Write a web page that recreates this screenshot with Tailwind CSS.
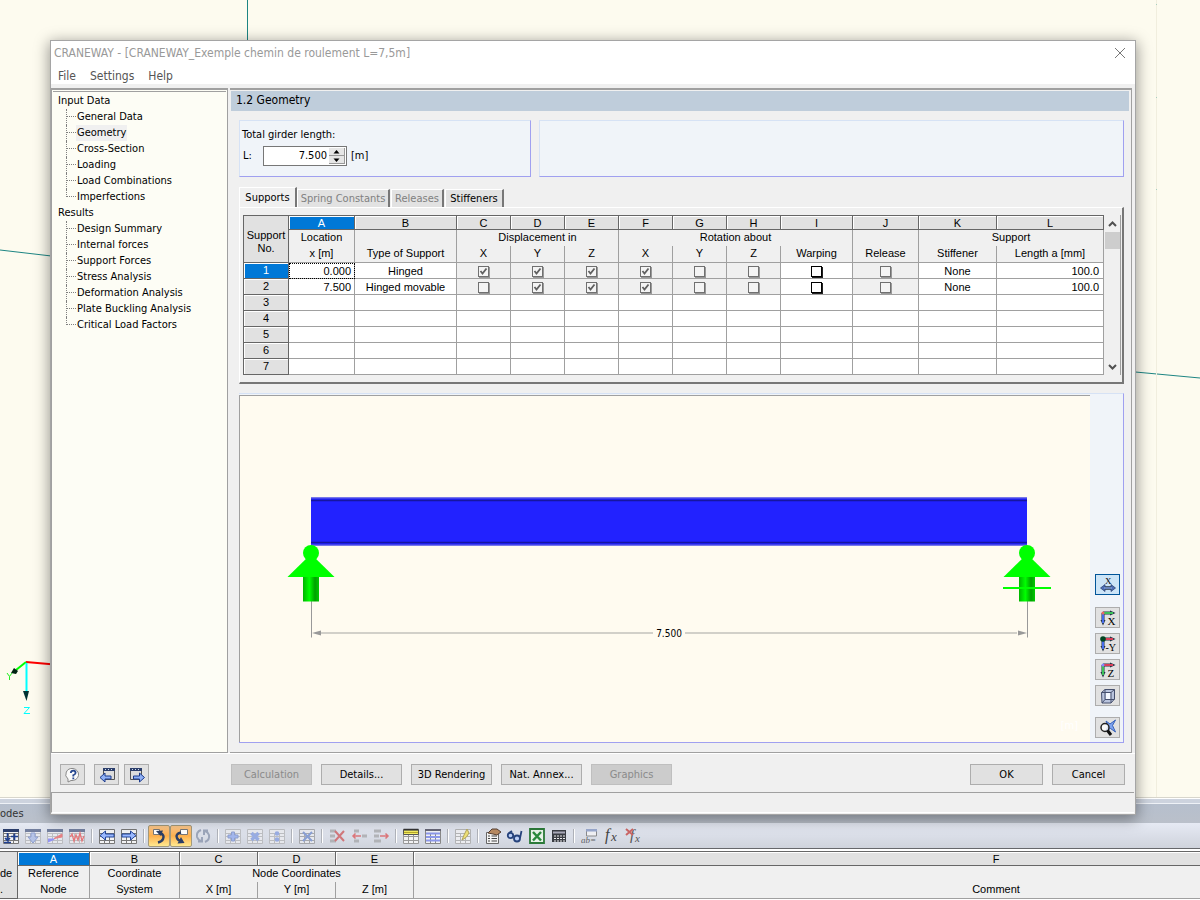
<!DOCTYPE html>
<html lang="en">
<head>
  <meta charset="UTF-8">
  <meta name="viewport" content="width=device-width, initial-scale=1.0">
  <title>CRANEWAY</title>
  <script src="https://cdn.jsdelivr.net/npm/@tailwindcss/browser@4"></script>
</head>
<body class="relative h-screen overflow-hidden flex flex-col bg-[#fdfbef] font-['DejaVu_Sans_Condensed','DejaVu_Sans',sans-serif] text-[11px] leading-4 text-black">

  <!-- model view behind the dialog -->
  <main class="flex-1 min-h-0 overflow-hidden">
    <svg class="w-full h-full" fill="none">
      <path d="M247.500 0V60M0 250L60 257M1130 371.500L1200 378" stroke="#1d8583" />
      <path d="M1156.500 0V797" stroke="#f1eede" />
      <path d="M1156.500 4V5M1156.500 97V98M1156.500 189V190" stroke="#a8cfc0" />
      <path d="M26 662L60 665" stroke="#f00" stroke-width="2" />
      <path d="M26 662L16 670" stroke="#0f0" stroke-width="2" />
      <path d="M11 673L14 668L18 671L16 674Z" fill="#021" />
      <path d="M26.500 663V692" stroke="#0ff" stroke-width="2" />
      <path d="M23 691H29L26.500 701Z" fill="#033" />
      <path d="M7 673L9.500 676.500L12 673M9.500 676.500V680" stroke="#2e2" />
      <path d="M24 707.500H29.500L24 713.500H30" stroke="#0ff" />
    </svg>
  </main>

  <!-- docked table -->
  <section class="shrink-0 overflow-hidden h-[103px] border-t border-[#d8d6cc] bg-white">
    <div class="h-[5px] bg-[#cdd3de] border-t border-white"></div>
    <div class="h-5 border-t border-[#eef1f6] bg-linear-to-b from-[#b6bfcd] to-[#bac0ca] leading-[19px] text-[#333]">odes</div>
    <div id="toolbar" class="h-[26px] flex items-center bg-linear-to-b from-[#e6eaf4] to-[#cfd3dc] border-b border-[#66676b]"></div>
    <table class="mt-0.5 w-[1578px] table-fixed border-separate border-spacing-0 border-t border-[#666] bg-[#f0f0f0] font-['Liberation_Sans',sans-serif] text-center">
      <colgroup><col class="w-[18px]"><col class="w-[72px]"><col class="w-[90px]"><col class="w-[78px]"><col class="w-[78px]"><col class="w-[78px]"><col></colgroup>
      <thead>
        <tr class="h-[14px] leading-[12px]">
          <th class="bg-[#e1e1e1] border-r border-[#666]"></th>
          <th class="p-0 font-normal border-r border-b border-[#666] bg-[#0078d7] text-white shadow-[inset_1px_1px_0_#fff]">A</th>
          <th class="p-0 font-normal border-r border-b border-[#666] bg-[#e1e1e1] shadow-[inset_1px_1px_0_#fff]">B</th>
          <th class="p-0 font-normal border-r border-b border-[#666] bg-[#e1e1e1] shadow-[inset_1px_1px_0_#fff]">C</th>
          <th class="p-0 font-normal border-r border-b border-[#666] bg-[#e1e1e1] shadow-[inset_1px_1px_0_#fff]">D</th>
          <th class="p-0 font-normal border-r border-b border-[#666] bg-[#e1e1e1] shadow-[inset_1px_1px_0_#fff]">E</th>
          <th class="p-0 font-normal border-b border-[#666] bg-[#e1e1e1] shadow-[inset_1px_1px_0_#fff]">F</th>
        </tr>
        <tr class="h-4 leading-[14px] align-top">
          <th class="p-0 font-normal bg-[#e1e1e1] border-r border-[#666] text-left">de</th>
          <th class="p-0 font-normal border-r border-[#a0a0a0]">Reference</th>
          <th class="p-0 font-normal border-r border-[#a0a0a0]">Coordinate</th>
          <th class="p-0 font-normal border-r border-[#a0a0a0]" colspan="3">Node Coordinates</th>
          <th></th>
        </tr>
        <tr class="h-[17px] leading-[14px] align-top">
          <th class="p-0 font-normal bg-[#e1e1e1] border-r border-b border-[#666] text-left">.</th>
          <th class="p-0 font-normal border-r border-b border-[#a0a0a0]">Node</th>
          <th class="p-0 font-normal border-r border-b border-[#a0a0a0]">System</th>
          <th class="p-0 font-normal border-r border-b border-[#a0a0a0]">X [m]</th>
          <th class="p-0 font-normal border-r border-b border-[#a0a0a0]">Y [m]</th>
          <th class="p-0 font-normal border-r border-b border-[#a0a0a0]">Z [m]</th>
          <th class="p-0 font-normal border-b border-[#a0a0a0]">Comment</th>
        </tr>
      </thead>
    </table>
  </section>

  <!-- dialog window -->
  <div role="dialog" aria-labelledby="dialog-title" class="absolute left-[50px] right-[64px] top-[40px] bottom-[85px] flex flex-col border border-[#a5a5a5] bg-[#f0f0f0] shadow-[0_3px_14px_1px_rgba(0,0,0,0.4)]">
    <header class="h-6 shrink-0 flex items-center justify-between bg-white pl-[3px] pr-2">
      <h1 id="dialog-title" class="text-[12px] text-[#999]">CRANEWAY - [CRANEWAY_Exemple chemin de roulement L=7,5m]</h1>
      <button aria-label="Close" class="size-3.5"><svg viewBox="0 0 14 14" fill="none" stroke="#777"><path d="M2 2L12 12M12 2L2 12" /></svg></button>
    </header>
    <nav class="h-[19px] shrink-0 flex gap-3.5 items-end bg-white pl-[7px] text-[12px] text-[#555]">
      <button>File</button><button>Settings</button><button>Help</button>
    </nav>

    <div class="flex-1 min-h-0 flex gap-0.5 pt-1 pr-[3px]">
      <aside class="w-[177px] shrink-0 border-t-2 border-l border-r border-b border-[#a0a0a0] bg-[#fdfdf5]">
        <ul id="tree" class="border-t border-[#a0a0a0] mt-px mx-px pl-[5px] pt-px"></ul>
      </aside>

      <div class="flex-1 min-w-0 flex flex-col border-t-2 border-r border-b border-[#a0a0a0] pl-px pr-0.5 pt-px">
        <h2 class="h-5 shrink-0 bg-[#bfcddb] pl-[5px] text-[12px] leading-[19px]">1.2 Geometry</h2>

        <div class="mt-[9px] ml-2 mr-[5px] h-[57px] shrink-0 flex gap-2">
          <fieldset class="w-[292px] flex flex-col pt-1.5 border-t border-l border-r border-b border-t-[#d6e2f5] border-l-[#d6e2f5] border-r-[#a0a0f0] border-b-[#a0a0f0] bg-[#f0f4f9] pl-0.5">
            <label for="girder-length">Total girder length:</label>
            <div class="mt-[3px] flex items-center">
              <label for="girder-length" class="w-[21px] pl-px">L:</label>
              <div class="flex w-[84px] h-5 mr-1 border border-[#777] bg-white p-px">
                <input id="girder-length" type="text" value="7.500" class="w-full min-w-0 text-right pr-0.5 outline-none">
                <div class="w-4 shrink-0 flex flex-col">
                  <button aria-label="Increase" class="h-2 grid place-items-center bg-[#e6e6e6] border-r border-b border-[#999]"><svg class="w-[7px] h-1" viewBox="0 0 7 4"><path d="M3.500 0L6.500 3.500H.5Z" /></svg></button>
                  <button aria-label="Decrease" class="h-2 grid place-items-center bg-[#e6e6e6] border-r border-b border-[#999]"><svg class="w-[7px] h-1" viewBox="0 0 7 4"><path d="M3.500 4L6.500 .5H.5Z" /></svg></button>
                </div>
              </div>
              <span>[m]</span>
            </div>
          </fieldset>
          <div class="flex-1 border-t border-l border-r border-b border-t-[#d6e2f5] border-l-[#d6e2f5] border-r-[#a0a0f0] border-b-[#a0a0f0] bg-[#f0f4f9]"></div>
        </div>

        <!-- tabs -->
        <div role="tablist" class="mt-2.5 ml-2 mr-[5px] shrink-0 flex items-end">
          <button role="tab" aria-selected="true" class="h-5 w-[58px] border-t border-l border-r-2 border-t-white border-l-white border-r-[#777] leading-[19px]">Supports</button>
          <button role="tab" disabled class="h-[18px] w-[93px] mr-px border-t border-l border-r-2 border-t-white border-l-white border-r-[#777] bg-[#e2e2e2] text-[#808080]">Spring Constants</button>
          <button role="tab" disabled class="h-[18px] w-[53px] mr-px border-t border-l border-r-2 border-t-white border-l-white border-r-[#777] bg-[#e2e2e2] text-[#808080]">Releases</button>
          <button role="tab" class="h-[18px] w-[59px] border-t border-l border-r-2 border-t-white border-l-white border-r-[#777] bg-[#e2e2e2]">Stiffeners</button>
        </div>

        <div class="ml-2 mr-[5px] h-[177px] shrink-0 flex items-start border-t border-l border-r-2 border-b-2 border-t-white border-l-white border-r-[#777] border-b-[#777] pt-[7px] pl-[3px] pr-px">
          <table class="flex-1 table-fixed border-separate border-spacing-0 border-t border-l border-[#666] font-['Liberation_Sans',sans-serif] text-center w-full">
            <colgroup><col class="w-[45px]"><col class="w-[66px]"><col class="w-[102px]"><col class="w-[54px]"><col class="w-[54px]"><col class="w-[54px]"><col class="w-[54px]"><col class="w-[54px]"><col class="w-[54px]"><col class="w-[72px]"><col class="w-[66px]"><col class="w-[78px]"><col></colgroup>
            <thead>
              <tr class="h-[14px] leading-[11px]">
                <th rowspan="3" class="p-0 pt-1.5 font-normal leading-[13px] bg-[#e1e1e1] border-r border-b border-[#666]">Support<br>No.</th>
                <th class="p-0 pt-0.5 font-normal border-r border-b border-[#666] bg-[#0078d7] text-white shadow-[inset_1px_1px_0_#fff]">A</th>
                <th class="p-0 pt-0.5 font-normal border-r border-b border-[#666] bg-[#e1e1e1] shadow-[inset_1px_1px_0_#fff]">B</th>
                <th class="p-0 pt-0.5 font-normal border-r border-b border-[#666] bg-[#e1e1e1] shadow-[inset_1px_1px_0_#fff]">C</th>
                <th class="p-0 pt-0.5 font-normal border-r border-b border-[#666] bg-[#e1e1e1] shadow-[inset_1px_1px_0_#fff]">D</th>
                <th class="p-0 pt-0.5 font-normal border-r border-b border-[#666] bg-[#e1e1e1] shadow-[inset_1px_1px_0_#fff]">E</th>
                <th class="p-0 pt-0.5 font-normal border-r border-b border-[#666] bg-[#e1e1e1] shadow-[inset_1px_1px_0_#fff]">F</th>
                <th class="p-0 pt-0.5 font-normal border-r border-b border-[#666] bg-[#e1e1e1] shadow-[inset_1px_1px_0_#fff]">G</th>
                <th class="p-0 pt-0.5 font-normal border-r border-b border-[#666] bg-[#e1e1e1] shadow-[inset_1px_1px_0_#fff]">H</th>
                <th class="p-0 pt-0.5 font-normal border-r border-b border-[#666] bg-[#e1e1e1] shadow-[inset_1px_1px_0_#fff]">I</th>
                <th class="p-0 pt-0.5 font-normal border-r border-b border-[#666] bg-[#e1e1e1] shadow-[inset_1px_1px_0_#fff]">J</th>
                <th class="p-0 pt-0.5 font-normal border-r border-b border-[#666] bg-[#e1e1e1] shadow-[inset_1px_1px_0_#fff]">K</th>
                <th class="p-0 pt-0.5 font-normal border-r border-b border-[#666] bg-[#e1e1e1] shadow-[inset_1px_1px_0_#fff]">L</th>
              </tr>
              <tr class="h-4 leading-[14px] align-top">
                <th class="p-0 font-normal border-r border-[#a0a0a0]">Location</th>
                <th class="p-0 font-normal border-r border-[#a0a0a0]"></th>
                <th colspan="3" class="p-0 font-normal border-r border-[#a0a0a0]">Displacement in</th>
                <th colspan="4" class="p-0 font-normal border-r border-[#a0a0a0]">Rotation about</th>
                <th class="p-0 font-normal border-r border-[#a0a0a0]"></th>
                <th colspan="2" class="p-0 font-normal border-r border-[#a0a0a0]">Support</th>
              </tr>
              <tr class="h-[17px] leading-[14px] align-top">
                <th class="p-0 font-normal border-r border-b border-[#a0a0a0]">x [m]</th>
                <th class="p-0 font-normal border-r border-b border-[#a0a0a0]">Type of Support</th>
                <th class="p-0 font-normal border-r border-b border-[#a0a0a0]">X</th>
                <th class="p-0 font-normal border-r border-b border-[#a0a0a0]">Y</th>
                <th class="p-0 font-normal border-r border-b border-[#a0a0a0]">Z</th>
                <th class="p-0 font-normal border-r border-b border-[#a0a0a0]">X</th>
                <th class="p-0 font-normal border-r border-b border-[#a0a0a0]">Y</th>
                <th class="p-0 font-normal border-r border-b border-[#a0a0a0]">Z</th>
                <th class="p-0 font-normal border-r border-b border-[#a0a0a0]">Warping</th>
                <th class="p-0 font-normal border-r border-b border-[#a0a0a0]">Release</th>
                <th class="p-0 font-normal border-r border-b border-[#a0a0a0]">Stiffener</th>
                <th class="p-0 font-normal border-r border-b border-[#a0a0a0]">Length a [mm]</th>
              </tr>
            </thead>
            <tbody id="rows"></tbody>
          </table>
          <div class="w-[17px] shrink-0 h-40 pl-px flex flex-col border-r border-[#a0a0a0]">
            <svg class="w-[15px] h-[17px]" viewBox="0 0 15 17" fill="none" stroke="#505050" stroke-width="2"><path d="M4 11L7.500 7.500L11 11" /></svg>
            <div class="h-[17px] bg-[#cdcdcd]"></div>
            <svg class="mt-auto w-[15px] h-[17px]" viewBox="0 0 15 17" fill="none" stroke="#505050" stroke-width="2"><path d="M4 7L7.500 10.500L11 7" /></svg>
          </div>
        </div>

        <!-- girder drawing -->
        <div class="mt-[9px] ml-2 mr-[5px] mb-[9px] flex-1 min-h-0 flex border-t border-r border-b border-t-[#d6e2f5] border-r-[#a0a0f0] border-b-[#a0a0f0] bg-[#f0f4f9]">
          <div class="flex-1 min-w-0 mt-px border-t border-l border-[#a0a0a0] bg-[#fffbf0]">
            <svg class="w-full h-full" viewBox="0 0 850 346">
              <defs>
                <linearGradient id="post"><stop offset="0" stop-color="#00b400" /><stop offset=".4" stop-color="#00ff00" /><stop offset=".75" stop-color="#00a000" /><stop offset="1" stop-color="#00c800" /></linearGradient>
                <g id="support">
                  <circle r="8" cy="157" /><path d="M-23.500 181L0 158L23.500 181Z" /><path d="M-8 181H8V205.500H-8Z" fill="url(#post)" />
                </g>
              </defs>
              <rect x="71" y="101.500" width="716" height="48" fill="#2222ff" />
              <path d="M71 102H787M71 149H787" stroke="#6262dd" />
              <path d="M71 104.500H787M71 146.500H787" stroke="#1616a0" stroke-width="1.500" />
              <path d="M71.500 205V241.500M787.500 205V241.500" stroke="#999" />
              <path d="M81 237H413M445 237H777" stroke="#c4c2bc" stroke-width="1.500" />
              <path d="M72 237L81 234.500V239.500ZM787 237L778 234.500V239.500Z" fill="#999" />
              <use href="#support" x="71" fill="#0f0" />
              <use href="#support" x="787" fill="#0f0" />
              <path d="M763 192H811" stroke="#0f0" stroke-width="2" />
              <text x="429" y="241" text-anchor="middle" class="text-[10px]">7.500</text>
              <text x="838" y="333" text-anchor="end" fill="#fff" class="text-[11px]">[m]</text>
            </svg>
          </div>
          <div id="views" class="w-[33px] shrink-0 flex flex-col items-center gap-[5px] pl-0.5 pb-1 justify-end"></div>
        </div>
      </div>
    </div>

    <footer class="h-[39px] shrink-0 flex items-center pt-[3px] pl-[9px] pr-2.5 border-t border-white gap-[9px]">
      <button aria-label="Help" class="w-[25px] h-[21px] grid place-items-center border border-[#adadad] bg-[#e1e1e1]">
        <svg class="size-4" viewBox="0 0 16 16"><path d="M8 1.500a6.500 6 0 1 1-2 12L3 15V12A6.500 6 0 0 1 8 1.500Z" fill="#fafafa" stroke="#888" /><path d="M5.800 6Q6 3.600 8.300 3.600T10.600 6Q10.500 7.200 8.300 8.200V9.600M8.300 10.600V12.300" fill="none" stroke="#27478f" stroke-width="1.800" /></svg>
      </button>
      <div class="flex gap-[5px]">
        <button aria-label="Previous" class="w-[25px] h-[21px] grid place-items-center border border-[#adadad] bg-[#e1e1e1]">
          <svg class="size-4" viewBox="0 0 16 16"><path d="M4.500 1.500H15.500V12.500H4.500Z" fill="#ddd" stroke="#555" /><path d="M4 1H16V4H4Z" fill="#2d3f6c" /><path d="M6 2.500H14" stroke="#cde" stroke-dasharray="1 2" /><path d="M1 10.500L6 6V9H12V12H6V15Z" fill="#8fb0f5" stroke="#1b3a8c" /></svg>
        </button>
        <button aria-label="Next" class="w-[25px] h-[21px] grid place-items-center border border-[#adadad] bg-[#e1e1e1]">
          <svg class="size-4" viewBox="0 0 16 16"><path d="M1.500 1.500H12.500V12.500H1.500Z" fill="#ddd" stroke="#555" /><path d="M1 1H13V4H1Z" fill="#2d3f6c" /><path d="M3 2.500H11" stroke="#cde" stroke-dasharray="1 2" /><path d="M15.500 10.500L10.500 6V9H4.500V12H10.500V15Z" fill="#8fb0f5" stroke="#1b3a8c" /></svg>
        </button>
      </div>
      <div class="ml-[73px] flex gap-[9px]">
        <button disabled class="w-[81px] h-[21px] pt-px border border-[#bfbfbf] bg-[#cccccc] text-[#8a8a8a]">Calculation</button>
        <button class="w-[81px] h-[21px] pt-px border border-[#adadad] bg-[#e1e1e1]">Details...</button>
        <button class="w-[81px] h-[21px] pt-px border border-[#adadad] bg-[#e1e1e1] whitespace-nowrap">3D Rendering</button>
        <button class="w-[81px] h-[21px] pt-px border border-[#adadad] bg-[#e1e1e1] whitespace-nowrap">Nat. Annex...</button>
        <button disabled class="w-[81px] h-[21px] pt-px border border-[#bfbfbf] bg-[#cccccc] text-[#8a8a8a]">Graphics</button>
      </div>
      <div class="ml-auto flex gap-[9px]">
        <button class="w-[73px] h-[21px] pt-px border border-[#adadad] bg-[#e1e1e1]">OK</button>
        <button class="w-[73px] h-[21px] pt-px border border-[#adadad] bg-[#e1e1e1]">Cancel</button>
      </div>
    </footer>
    <div class="h-[21px] shrink-0 mr-px mb-px border-t border-l border-b border-t-[#a0a0a0] border-l-[#a0a0a0] border-b-white"></div>
  </div>

  <script>
    // navigator tree
    const tree = [
      ['Input Data', ['General Data', 'Geometry', 'Cross-Section', 'Loading', 'Load Combinations', 'Imperfections']],
      ['Results', ['Design Summary', 'Internal forces', 'Support Forces', 'Stress Analysis', 'Deformation Analysis', 'Plate Buckling Analysis', 'Critical Load Factors']]
    ];
    document.getElementById('tree').innerHTML = tree.map(([title, items]) => `
      <li>${title}
        <ul class="pl-2">${items.map((item, i) => `
          <li class="flex">
            <span class="w-px border-l border-dotted border-[#808080] ${i === items.length - 1 ? 'h-2' : 'h-4'}"></span>
            <span class="w-[9px] h-2 border-b border-dotted border-[#808080]"></span>
            <a href="#" class="px-px ${item === 'Geometry' ? 'bg-[#f0f0f0]' : ''}">${item}</a>
          </li>`).join('')}</ul>
      </li>`).join('');

    // supports table, 1 = checked
    const supports = [
      ['0.000', 'Hinged', [1, 1, 1, 1, 0, 0, 0, 0], 'None', '100.0'],
      ['7.500', 'Hinged movable', [0, 1, 1, 1, 0, 0, 0, 0], 'None', '100.0']
    ];
    const flags = ['Displacement X', 'Displacement Y', 'Displacement Z', 'Rotation X', 'Rotation Y', 'Rotation Z', 'Warping', 'Release'];
    const cell = (content, extra = '') => `<td class="p-0 pt-0.5 h-4 leading-[13px] border-r border-b border-[#a0a0a0] ${extra || 'bg-white'}">${content}</td>`;
    const check = (on, i, row) => cell(`
      <label class="grid place-items-center" aria-label="${flags[i]} ${row + 1}">
        <input type="checkbox" ${on ? 'checked' : ''} ${i === 6 ? '' : 'disabled'} class="peer col-start-1 row-start-1 size-[11px] appearance-none border ${i === 6 ? 'border-black bg-white shadow-[1px_1px_0_#222]' : 'border-[#707070] bg-[#f4f4f4] shadow-[1px_1px_0_#999]'}">
        <svg class="col-start-1 row-start-1 size-[9px] hidden peer-checked:block" viewBox="0 0 9 9" fill="none" stroke="#606060" stroke-width="1.800"><path d="M1.500 4L3.500 6.500L7.500 1.500" /></svg>
      </label>`, i === 6 ? 'bg-white' : 'bg-[#f0f0f0]');
    let rows = '';
    for (let r = 0; r < 7; r++) {
      const s = supports[r];
      rows += `<tr class="h-4"><th class="p-0 font-normal leading-[15px] border-r border-b border-[#666] ${r === 0 ? 'bg-[#0078d7] text-white' : 'bg-[#e1e1e1]'} shadow-[inset_1px_1px_0_#fff]">${r + 1}</th>`;
      if (s) {
        rows += cell(s[0], r === 0 ? 'bg-white text-right pr-[3px] outline outline-dotted outline-black -outline-offset-1' : 'bg-white text-right pr-[3px]');
        rows += cell(s[1]) + s[2].map((on, i) => check(on, i, r)).join('') + cell(s[3]) + cell(s[4], 'bg-white text-right pr-1');
      } else {
        rows += cell('').repeat(12);
      }
      rows += '</tr>';
    }
    document.getElementById('rows').innerHTML = rows;

    // view buttons right of the drawing
    const axes = (right, down, dot, name) => `
      <path d="M3 3H11" stroke="#234" stroke-width="3" /><path d="M10 .5L15.500 3L10 5.500Z" fill="#234" />
      <path d="M3 3V11" stroke="#234" stroke-width="3" /><path d="M.5 10L3 15.500L5.500 10Z" fill="#234" />
      <path d="M3 3H13" stroke="${right}" stroke-width="1.800" /><path d="M3 4V13" stroke="${down}" stroke-width="1.800" />
      <circle cx="3" cy="3" r="${name === '-Y' ? 2.800 : 1.500}" fill="${dot}" />
      <text x="${name === '-Y' ? 5.500 : 7.500}" y="15" font-size="${name === '-Y' ? 10 : 11}" class="font-['Liberation_Serif',serif]">${name}</text>`;
    const views = [
      ['Dimensions', '<path d="M4 11H12" stroke="#234" stroke-width="3.500" /><path d="M5 7.500L.5 11L5 14.500ZM11 7.500L15.500 11L11 14.500Z" fill="#4d6db4" stroke="#223a6c" stroke-width=".7" /><path d="M4 11H12" stroke="#7f9ee0" stroke-width="1.500" /><text x="5" y="6.500" font-size="9" class="font-[\'Liberation_Serif\',serif]">X</text>'],
      ['View in X', axes('#3fd35c', '#4a72ff', '#e66', 'X')],
      ['View in -Y', axes('#f0405c', '#4a72ff', '#042', '-Y')],
      ['View in Z', axes('#f0405c', '#3fd35c', '#88f', 'Z')],
      ['Isometric', '<path d="M1.500 4.500L5 1.500H14.500V11L11 15H2Z" fill="#b9c4de" stroke="#46506e" /><path d="M6 5H10.500V11H6Z" fill="#f4f8ff" /><path d="M1.500 4.500L11 4.500L14.500 1.500M11 4.500V15M5 1.500V11.500H14.500M5 11.500L2 15" fill="none" stroke="#46506e" />'],
      ['Zoom', '<path d="M6 1L10 4L15.500 0L12.500 5.500L15.500 12L10.500 8.500L6 11L8 6Z" fill="#7fa4f0" stroke="#345fb8" /><circle cx="5" cy="7.500" r="4" fill="#fff" fill-opacity=".8" stroke="#222" stroke-width="1.500" /><path d="M7.500 10.500L11 15" stroke="#111" stroke-width="3" />']
    ];
    document.getElementById('views').innerHTML = views.map(([name, icon], i) => `
      <button aria-label="${name}" class="w-[25px] h-[21px] shrink-0 grid place-items-center border ${i === 0 ? 'mb-[7px] border-[#005499] bg-[#cce4f7]' : 'border-[#adadad] bg-[#e1e1e1]'} ${i === 5 ? 'mt-1.5' : ''}"><svg class="size-4 overflow-visible" viewBox="0 0 16 16">${icon}</svg></button>`).join('');

    // docked table toolbar, null = separator
    const grid = (c) => `<path d="M.5 1.500H15.500V15.500H.5ZM.5 5.500H15.500M.5 8.500H15.500M.5 12.500H15.500M5.500 5V15M10.500 5V15" fill="#f2f2f4" stroke="${c}" />`;
    const head = '<path d="M0 1H16V4H0Z" fill="#2b3d6b" />';
    const left = '<path d="M1 7.500L6.500 3V6H15V9H6.500V12Z" fill="#9ab8ff" stroke="#23469c" />';
    const right = '<path d="M15 7.500L9.500 3V6H1V9H9.500V12Z" fill="#9ab8ff" stroke="#23469c" />';
    const tools = [
      ['Sort', grid('#777') + head + '<path d="M4.500 5V12M2 10L4.500 12.500L7 10M8 8.500H15M11.500 5.500V12M1 14.500H8" stroke="#1f3f90" stroke-width="1.600" fill="none" />'],
      ['Insert', grid('#aaa') + head + '<path d="M6 5H10V9H13L8 15L3 9H6Z" fill="#9fb4e8" stroke="#5c76c0" />', 'opacity-60'],
      ['Diagram', grid('#aaa') + head + '<path d="M1 14.500L7 12L8 10.500H1Z" fill="#66f" /><path d="M7 10.500L15 6V9Z" fill="#e44" stroke="#e44" />', 'opacity-60'],
      ['Curve', grid('#aaa') + head + '<path d="M1 9L3 6L5 13L7 7L9 12L11 5L13 13L15 8" stroke="#e33" stroke-width="1.300" fill="none" />', 'opacity-60'],
      null,
      ['Previous table', grid('#777') + left], ['Next table', grid('#777') + right],
      null,
      ['Undo', '<path d="M2.500 1.500H8.500V6.500H2.500Z" fill="#fff" stroke="#777" /><path d="M5 3L12 2.500L9.500 8Z" fill="#2c3f66" /><path d="M9 5Q14 7 12 11Q11 13.500 7 14.500" stroke="#2c3f66" stroke-width="2.500" fill="none" />', 'on'],
      ['Redo', '<path d="M7.500 1.500H14.500V6.500H7.500Z" fill="#fff" stroke="#777" /><path d="M8 4.500Q2 6 4 10Q5 12.500 8 13" stroke="#2c3f66" stroke-width="2.500" fill="none" /><path d="M8 9L11.500 15L4.500 15.500Z" fill="#2c3f66" />', 'on'],
      ['Refresh', '<path d="M6 2Q1 4 2 9Q3 12 6 13M3 13.500H7V9M10 14Q15 12 14 7Q13 4 10 3M13 2.500H9V7" stroke="#73809c" stroke-width="2" fill="none" />', 'opacity-60'],
      null,
      ['Add', grid('#aaa') + '<path d="M6.500 4H9.500V7H13V10H9.500V13H6.500V10H3V7H6.500Z" fill="#7f9df0" stroke="#5c76c0" />', 'opacity-60'],
      ['Multiply', grid('#aaa') + '<path d="M4.500 5L11.500 12M11.500 5L4.500 12" stroke="#6f8de0" stroke-width="3.500" />', 'opacity-60'],
      ['Divide', grid('#aaa') + '<circle cx="8" cy="5.500" r="2.300" fill="#6f8de0" /><circle cx="8" cy="11.500" r="2.300" fill="#6f8de0" />', 'opacity-60'],
      null,
      ['Clear', grid('#888') + '<path d="M4 4L13 13M13 4L4 13" stroke="#5577c8" stroke-width="2" />', 'opacity-60'],
      null,
      ['Delete row', '<path d="M1 3H7M1 8H6M1 13H7" stroke="#999" stroke-width="3" /><path d="M6 3L15 13M15 3L6 13" stroke="#c33" stroke-width="2" />', 'opacity-60'],
      ['Row left', '<path d="M3 3H8M11 8H16M3 13H8" stroke="#999" stroke-width="3" /><path d="M2 8H10M4.500 5.500L2 8L4.500 10.500" stroke="#d33" stroke-width="1.500" fill="none" />', 'opacity-60'],
      ['Row right', '<path d="M1 3H8M1 8H6M1 13H8" stroke="#999" stroke-width="3" /><path d="M7 8H15M12.500 5.500L15 8L12.500 10.500" stroke="#d33" stroke-width="1.500" fill="none" />', 'opacity-60'],
      null,
      ['Colors', grid('#999') + '<path d="M.5 2H15.500V6.500H.5Z" fill="#f5ee62" stroke="#555" /><path d="M1 4.500H15" stroke="#b8a82c" /><path d="M.5 1.500H15.500" stroke="#333" stroke-width="1.500" />'],
      ['Rows', grid('#888') + '<path d="M0 2H16" stroke="#667" stroke-width="2" /><path d="M1 5.500H15M1 9H15M1 12.500H15" stroke="#8c97ea" stroke-width="2" />'],
      null,
      ['Pick', grid('#aaa') + '<path d="M12 1L14 5Q12 10 7 12L9 7Z" fill="#f3e15c" stroke="#a9973c" />', 'opacity-80'],
      null,
      ['Properties', '<path d="M1.500 4.500H13.500V15.500H1.500Z" fill="#f4f4f4" stroke="#666" /><path d="M3 8H5M6.500 8H12M3 10.500H5M6.500 10.500H12M3 13H5M6.500 13H12" stroke="#444" /><path d="M3 5L7 1H12L16 4L12 7L8 6Z" fill="#b98b62" stroke="#564033" />'],
      ['Glasses', '<circle cx="3.500" cy="7.500" r="2.700" fill="#bcd0f8" stroke="#26437c" stroke-width="1.800" /><circle cx="10" cy="10.500" r="3" fill="#bcd0f8" stroke="#26437c" stroke-width="1.800" /><path d="M2 5L5 3M13 10L14.500 3" stroke="#26437c" stroke-width="1.800" />'],
      ['Excel', '<path d="M1 1H15V15H1Z" fill="#e9f4e9" stroke="#2c7a39" stroke-width="1.800" /><path d="M4 4L12 12.500M12 4L4 12.500" stroke="#2a8a3c" stroke-width="2.500" />'],
      ['Calculator', '<path d="M1 2H15V14H1Z" fill="#3a3d44" /><path d="M2 4.500H14" stroke="#aab" stroke-width="2" /><path d="M3 8H14M3 10.500H14M3 13H14" stroke="#eee" stroke-dasharray="2 1" />'],
      null,
      ['Label', '<path d="M5.500 1.500H15.500V8H5.500Z" fill="#f6f6f8" stroke="#777" /><path d="M5 1H16V3.500H5Z" fill="#8b9cc8" /><text x="0" y="15" font-size="9" fill="#444" font-style="italic" class="font-[\'Liberation_Serif\',serif]">ab=</text>', 'opacity-80'],
      ['Formula', '<text x="2" y="12" font-size="16" fill="#444" font-style="italic" class="font-[\'Liberation_Serif\',serif]">f</text><text x="8" y="13" font-size="13" fill="#444" font-style="italic" class="font-[\'Liberation_Serif\',serif]">x</text>'],
      ['Delete formula', '<text x="5" y="12" font-size="15" fill="#555" font-style="italic" class="font-[\'Liberation_Serif\',serif]">f</text><text x="10" y="14" font-size="11" fill="#555" font-style="italic" class="font-[\'Liberation_Serif\',serif]">x</text><path d="M1 1L8 7M8 1L1 7" stroke="#c66" stroke-width="2" />']
    ];
    document.getElementById('toolbar').innerHTML = tools.map((tool) => {
      if (!tool) return '<span class="w-2 shrink-0 flex justify-center"><span class="w-0.5 h-3.5 border-r border-white bg-[#b0b3ba]"></span></span>';
      const [name, icon, state] = tool;
      const look = state === 'on' ? 'border border-[#a49a7c] rounded-xs bg-linear-to-b from-[#fbc78c] via-[#fdb04c] to-[#fee98f]' : (state || '');
      return `<button aria-label="${name}" class="w-[22px] h-[22px] shrink-0 grid place-items-center ${look}"><svg class="size-4 overflow-visible" viewBox="0 0 16 16">${icon}</svg></button>`;
    }).join('');
  </script>
</body>
</html>
